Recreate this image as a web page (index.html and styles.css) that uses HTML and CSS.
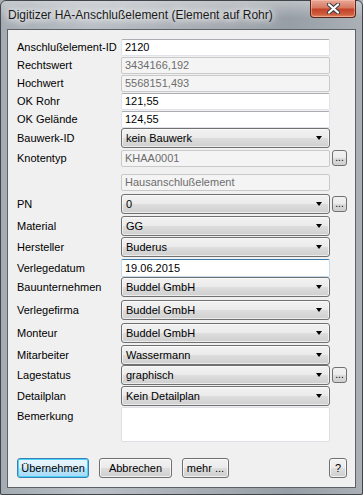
FILE: index.html
```html
<!DOCTYPE html>
<html lang="de">
<head>
  <meta charset="UTF-8">
  <title>Digitizer HA-Anschlußelement</title>
  <link rel="stylesheet" href="styles.css">
</head>
<body>

  <div class="window">
    <div class="titlebar">
      <span class="title">Digitizer HA-Anschlußelement (Element auf Rohr)</span>
      <div class="close-btn">
        <svg width="13" height="11" viewBox="0 0 13 11">
          <path d="M2 1.5 L11 9.5 M11 1.5 L2 9.5" stroke="#3b3f44" stroke-width="4.2" stroke-linecap="round"/>
          <path d="M2 1.5 L11 9.5 M11 1.5 L2 9.5" stroke="#ffffff" stroke-width="2.2" stroke-linecap="round"/>
        </svg>
      </div>
    </div>

    <div class="client">
      <div class="form">

        <div class="row h18">
          <label>Anschlußelement-ID</label>
          <div class="input">2120</div>
        </div>
        <div class="row h18">
          <label>Rechtswert</label>
          <div class="input disabled">3434166,192</div>
        </div>
        <div class="row h18">
          <label>Hochwert</label>
          <div class="input disabled">5568151,493</div>
        </div>
        <div class="row h18">
          <label>OK Rohr</label>
          <div class="input">121,55</div>
        </div>
        <div class="row h18">
          <label>OK Gelände</label>
          <div class="input">124,55</div>
        </div>
        <div class="row h20">
          <label>Bauwerk-ID</label>
          <div class="combo">kein Bauwerk</div>
        </div>
        <div class="row h18 mt1">
          <label>Knotentyp</label>
          <div class="input disabled">KHAA0001</div>
          <div class="dots">...</div>
        </div>
        <div class="row h18 mt6">
          <label></label>
          <div class="input disabled">Hausanschlußelement</div>
        </div>
        <div class="row h20 mt3">
          <label>PN</label>
          <div class="combo">0</div>
          <div class="dots">...</div>
        </div>
        <div class="row h20 mt2">
          <label>Material</label>
          <div class="combo">GG</div>
        </div>
        <div class="row h20 mt1">
          <label>Hersteller</label>
          <div class="combo">Buderus</div>
        </div>
        <div class="row h19 mt1">
          <label>Verlegedatum</label>
          <div class="input focus">19.06.2015</div>
        </div>
        <div class="row h20">
          <label>Bauunternehmen</label>
          <div class="combo">Buddel GmbH</div>
        </div>
        <div class="row h20 mt3">
          <label>Verlegefirma</label>
          <div class="combo">Buddel GmbH</div>
        </div>
        <div class="row h20 mt3">
          <label>Monteur</label>
          <div class="combo">Buddel GmbH</div>
        </div>
        <div class="row h19 mt2">
          <label>Mitarbeiter</label>
          <div class="combo">Wassermann</div>
        </div>
        <div class="row h20 mt1">
          <label>Lagestatus</label>
          <div class="combo">graphisch</div>
          <div class="dots">...</div>
        </div>
        <div class="row h20 mt1">
          <label>Detailplan</label>
          <div class="combo">Kein Detailplan</div>
        </div>
        <div class="row memo-row mt1">
          <label>Bemerkung</label>
          <div class="memo"></div>
        </div>

        <div class="buttons">
          <div class="btn default w-ok">Übernehmen</div>
          <div class="btn w-cancel">Abbrechen</div>
          <div class="btn w-more">mehr ...</div>
          <div class="spacer"></div>
          <div class="btn w-help">?</div>
        </div>

      </div>
    </div>
  </div>

</body>
</html>
```

FILE: styles.css
```css
* {
  box-sizing: border-box;
}

body {
  margin: 0;
  padding: 0;
  background: #a9afb5;
  font-family: 'Liberation Sans', Arial, sans-serif;
  font-size: 11px;
  color: #000;
}

.window {
  width: 363px;
  height: 495px;
  border: 1px solid #3f454b;
  border-radius: 6px 6px 2px 2px;
  background: linear-gradient(to right, #a4abb2 0%, #b9bfc5 25%, #a7adb3 55%, #979ea5 80%, #aab0b6 100%);
  display: flex;
  flex-direction: column;
}

.titlebar {
  height: 28px;
  display: flex;
  justify-content: space-between;
  align-items: flex-start;
  padding-left: 7px;
  padding-right: 6px;
  background: linear-gradient(to bottom, rgba(255, 255, 255, 0.35), rgba(255, 255, 255, 0) 60%);
  border-radius: 5px 5px 0 0;
}

.title {
  margin-top: 7px;
  font-size: 12px;
  color: #1a1a1a;
  text-shadow: 0 0 6px #ffffff, 0 0 10px #ffffff, 0 0 14px rgba(255, 255, 255, 0.9);
}

.close-btn {
  width: 46px;
  height: 18px;
  margin-top: -1px;
  border: 1px solid #5b2419;
  border-top: none;
  border-radius: 0 0 4px 4px;
  background: linear-gradient(to bottom, #e8a897 0%, #d77a62 45%, #c2432a 55%, #cf5e3e 85%, #e08a6a 100%);
  box-shadow: inset 0 0 0 1px rgba(255, 200, 180, 0.5);
  display: flex;
  justify-content: center;
  align-items: center;
}

.client {
  flex: 1;
  margin: 0 6px 6px 6px;
  border: 1px solid #5b6166;
  background: #f0f0f0;
}

.form {
  padding: 8px 0 0 9px;
  display: flex;
  flex-direction: column;
}

.row {
  display: grid;
  grid-template-columns: 104px 209px 17px;
  align-items: center;
}

.row label {
  white-space: nowrap;
}

.h18 { height: 18px; }
.h19 { height: 19px; }
.h20 { height: 20px; }
.mt1 { margin-top: 1px; }
.mt2 { margin-top: 2px; }
.mt3 { margin-top: 3px; }
.mt6 { margin-top: 6px; }

.input {
  height: 18px;
  line-height: 16px;
  padding-left: 3px;
  background: #ffffff;
  border: 1px solid #e2e3ea;
  border-top-color: #abadb3;
  border-radius: 2px;
  white-space: nowrap;
}

.h18 .input {
  height: 17px;
  line-height: 15px;
}

.input.disabled {
  background: #f4f4f4;
  border-color: #c9c9c9;
  color: #6d6d6d;
}

.input.focus {
  border-color: #c5daed;
  border-top-color: #3d7bad;
}

.combo {
  position: relative;
  height: 100%;
  line-height: 18px;
  padding-left: 4px;
  border: 1px solid #707070;
  border-radius: 3px;
  background: linear-gradient(to bottom, #f2f2f2 0%, #ebebeb 48%, #dddddd 52%, #cfcfcf 100%);
  box-shadow: inset 0 0 0 1px rgba(255, 255, 255, 0.6);
  white-space: nowrap;
}

.combo::after {
  content: "";
  position: absolute;
  right: 7px;
  top: 50%;
  margin-top: -2px;
  border-left: 3.5px solid transparent;
  border-right: 3.5px solid transparent;
  border-top: 4px solid #000000;
}

.dots {
  width: 15px;
  height: 16px;
  margin-left: 2px;
  border: 1px solid #707070;
  border-radius: 3px;
  background: linear-gradient(to bottom, #f2f2f2 0%, #ebebeb 48%, #dddddd 52%, #cfcfcf 100%);
  font-size: 10px;
  line-height: 14px;
  text-align: center;
}

.memo-row {
  align-items: start;
}

.memo-row label {
  padding-top: 3px;
}

.memo {
  height: 35px;
  background: #ffffff;
  border: 1px solid #dcdfe4;
  border-radius: 2px;
}

.buttons {
  display: flex;
  gap: 10px;
  margin-top: 16px;
  width: 330px;
}

.btn {
  height: 20px;
  line-height: 18px;
  text-align: center;
  border: 1px solid #707070;
  border-radius: 3px;
  background: linear-gradient(to bottom, #f2f2f2 0%, #ebebeb 48%, #dddddd 52%, #cfcfcf 100%);
  box-shadow: inset 0 0 0 1px rgba(255, 255, 255, 0.7);
}

.btn.default {
  border-color: #3c7fb1;
  background: linear-gradient(to bottom, #eaf6fd 0%, #d9f0fc 48%, #bee6fd 52%, #a7d9f5 100%);
  box-shadow: inset 0 0 0 1px #48d3fb;
}

.spacer {
  flex: 1;
}

.w-ok { width: 72px; }
.w-cancel { width: 73px; }
.w-more { width: 47px; }
.w-help { width: 18px; }
```
